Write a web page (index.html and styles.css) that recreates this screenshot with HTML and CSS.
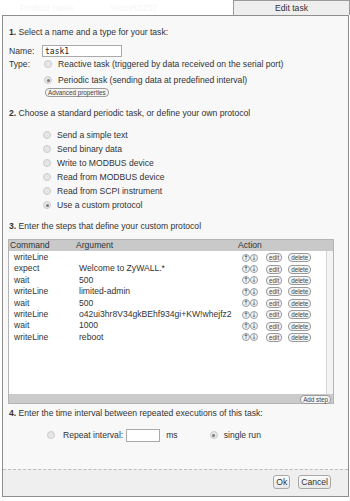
FILE: index.html
```html
<!DOCTYPE html>
<html lang="en">
<head>
    <meta charset="UTF-8">
    <title>Edit task</title>
    <link rel="stylesheet" href="styles.css">
</head>
<body>

    <div class="topbar">
        <span class="ghost ghost-name">Product name</span>
        <span class="ghost ghost-serial">YoctoRS232</span>
        <div class="tab">Edit task</div>
    </div>

    <div class="dialog">
        <div class="content">
            <!-- 1. name and type -->
            <p class="step step1"><b>1.</b> Select a name and a type for your task:</p>
            <div class="name-row">
                <span class="label">Name:</span>
                <input type="text" class="name-input" value="task1">
            </div>
            <div class="type-row">
                <span class="label">Type:</span>
                <span class="opt"><span class="radio"></span>Reactive task (triggered by data received on the serial port)</span>
            </div>
            <div class="type-row periodic">
                <span class="label"></span>
                <span class="opt"><span class="radio checked"></span>Periodic task (sending data at predefined interval)</span>
            </div>
            <div class="adv-row">
                <span class="pill">Advanced properties</span>
            </div>

            <!-- 2. protocol -->
            <p class="step step2"><b>2.</b> Choose a standard periodic task, or define your own protocol</p>
            <ul class="choices">
                <li class="opt"><span class="radio"></span>Send a simple text</li>
                <li class="opt"><span class="radio"></span>Send binary data</li>
                <li class="opt"><span class="radio"></span>Write to MODBUS device</li>
                <li class="opt"><span class="radio"></span>Read from MODBUS device</li>
                <li class="opt"><span class="radio"></span>Read from SCPI instrument</li>
                <li class="opt"><span class="radio checked"></span>Use a custom protocol</li>
            </ul>

            <!-- 3. steps -->
            <p class="step step3"><b>3.</b> Enter the steps that define your custom protocol</p>
            <div class="steps">
                <div class="steps-head">
                    <span>Command</span>
                    <span>Argument</span>
                    <span>Action</span>
                </div>
                <div class="steps-body">
                    <div class="rows" id="rows"></div>
                    <div class="scroll"></div>
                </div>
                <div class="steps-foot">
                    <span class="pill">Add step</span>
                </div>
            </div>

            <!-- 4. interval -->
            <p class="step step4"><b>4.</b> Enter the time interval between repeated executions of this task:</p>
            <div class="interval-row">
                <span class="radio"></span>
                <span class="repeat-label">Repeat interval:</span>
                <input type="text" class="ms-input">
                <span class="ms">ms</span>
                <span class="radio checked"></span>
                <span>single run</span>
            </div>
        </div>

        <div class="footer">
            <button class="btn">Ok</button>
            <button class="btn">Cancel</button>
        </div>
    </div>

    <script>
        let steps = [
            ["writeLine", ""],
            ["expect", "Welcome to ZyWALL.*"],
            ["wait", "500"],
            ["writeLine", "limited-admin"],
            ["wait", "500"],
            ["writeLine", "o42ui3hr8V34gkBEhf934gi+KW!whejfz2"],
            ["wait", "1000"],
            ["writeLine", "reboot"]
        ];

        let rows = document.getElementById("rows");
        steps.forEach(step => {
            let row = document.createElement("div");
            row.className = "row";
            row.innerHTML = `
                <span>${step[0]}</span>
                <span>${step[1]}</span>
                <span class="actions">
                    <span class="arrow">&#8593;</span><span class="arrow">&#8595;</span>
                    <span class="pill edit">edit</span>
                    <span class="pill">delete</span>
                </span>
            `;
            rows.appendChild(row);
        });
    </script>

</body>
</html>
```

FILE: styles.css
```css
body {
    margin: 0;
    background: #ffffff;
    font-family: "Liberation Sans", Arial, sans-serif;
    font-size: 8.6px;
    color: #333;
}
.topbar {
    display: flex;
    align-items: center;
    height: 15px;
}
.ghost {
    color: #f6f6f6;
}
.ghost-name {
    margin-left: 20px;
}
.ghost-serial {
    margin-left: 36px;
}
.tab {
    margin-left: auto;
    width: 117px;
    height: 15px;
    box-sizing: border-box;
    border: 1px solid #9a9a9a;
    border-bottom: none;
    background: #eeeeee;
    text-align: center;
    line-height: 14px;
}
.dialog {
    margin: 0 1px 0 2px;
    height: 482px;
    box-sizing: border-box;
    border: 1px solid #8e8e8e;
    background: #f8f8f8;
    display: flex;
    flex-direction: column;
}
.content {
    flex: 1;
    padding: 0 6px;
}
.step {
    margin: 0;
    line-height: 12px;
}
.step1 {
    margin-top: 10px;
}
.name-row {
    display: flex;
    align-items: center;
    height: 14px;
    margin-top: 6px;
}
.label {
    width: 33px;
}
.name-input {
    width: 80px;
    height: 12px;
    box-sizing: border-box;
    border: 1px solid #aaa;
    padding: 0 2px;
    font-family: "DejaVu Sans Mono", monospace;
    font-size: 8px;
    color: #222;
    background: #fff;
}
.type-row {
    display: flex;
    align-items: center;
    height: 12px;
}
.type-row.periodic {
    margin-top: 4px;
}
.opt {
    display: flex;
    align-items: center;
}
.radio {
    display: inline-block;
    width: 8px;
    height: 8px;
    box-sizing: border-box;
    border-radius: 50%;
    border: 1px solid #cccccc;
    background: #e6e6e6;
    position: relative;
    margin: 0 6px 0 2px;
    flex: none;
}
.radio.checked::after {
    content: "";
    position: absolute;
    left: 1.5px;
    top: 1.5px;
    width: 3px;
    height: 3px;
    border-radius: 50%;
    background: #7a7a7a;
}
.adv-row {
    margin-top: 1px;
    padding-left: 36px;
    height: 10px;
}
.pill {
    display: inline-block;
    height: 9px;
    box-sizing: border-box;
    border: 1px solid #9a9a9a;
    border-radius: 4px;
    background: #f4f4f4;
    font-size: 6.3px;
    line-height: 7px;
    padding: 0 2px;
    color: #444;
}
.step2 {
    margin-top: 10px;
}
.choices {
    list-style: none;
    margin: 9px 0 0 0;
    padding: 0 0 0 32px;
}
.choices li {
    height: 14px;
}
.step3 {
    margin-top: 8px;
}
.steps {
    margin: 7px 0 0 -1px;
    width: 324px;
    border: 1px solid #b4b4b4;
    background: #fff;
}
.steps-head {
    display: grid;
    grid-template-columns: 66px 162px auto;
    height: 11px;
    line-height: 11px;
    padding-left: 1px;
    background: #c9c9c9;
    color: #333;
}
.steps-body {
    display: flex;
    height: 143px;
}
.rows {
    flex: 1;
    padding-top: 1px;
}
.scroll {
    width: 6px;
    border-left: 1px solid #d6d6d6;
    background: #f3f3f3;
}
.row {
    display: grid;
    grid-template-columns: 65px 160px auto;
    height: 11.4px;
    line-height: 11.4px;
    padding-left: 5px;
    white-space: nowrap;
}
.actions {
    display: flex;
    align-items: center;
    padding-left: 3px;
}
.arrow {
    display: inline-block;
    width: 8px;
    height: 8px;
    box-sizing: border-box;
    border: 1px solid #9a9a9a;
    border-radius: 50%;
    font-family: "DejaVu Sans", sans-serif;
    font-size: 6.5px;
    line-height: 6px;
    text-align: center;
    background: #f6f6f6;
    color: #444;
}
.actions .edit {
    margin: 0 6px 0 8px;
}
.steps-foot {
    height: 9px;
    background: #cbcbcb;
    display: flex;
    justify-content: flex-end;
    align-items: flex-end;
    padding-right: 2px;
}
.steps-foot .pill {
    margin-bottom: -1px;
}
.step4 {
    margin-top: 3px;
}
.interval-row {
    display: flex;
    align-items: center;
    height: 14px;
    margin-top: 9px;
    padding-left: 36px;
}
.repeat-label {
    margin-left: 2px;
}
.ms-input {
    width: 34px;
    height: 13px;
    box-sizing: border-box;
    border: 1px solid #aaa;
    margin-left: 3px;
    background: #fff;
}
.ms {
    margin: 0 30px 0 6px;
}
.footer {
    height: 27px;
    box-sizing: border-box;
    border-top: 1px dashed #bdbdbd;
    background: #efefef;
    display: flex;
    justify-content: flex-end;
    align-items: center;
    gap: 8px;
    padding: 0 17px 2px 0;
}
.btn {
    height: 14px;
    padding: 0 2px;
    font-family: "Liberation Sans", Arial, sans-serif;
    font-size: 8.6px;
    color: #333;
    border: 1px solid #a8a8a8;
    border-radius: 3px;
    background: linear-gradient(#fbfbfb, #e8e8e8);
}
```
